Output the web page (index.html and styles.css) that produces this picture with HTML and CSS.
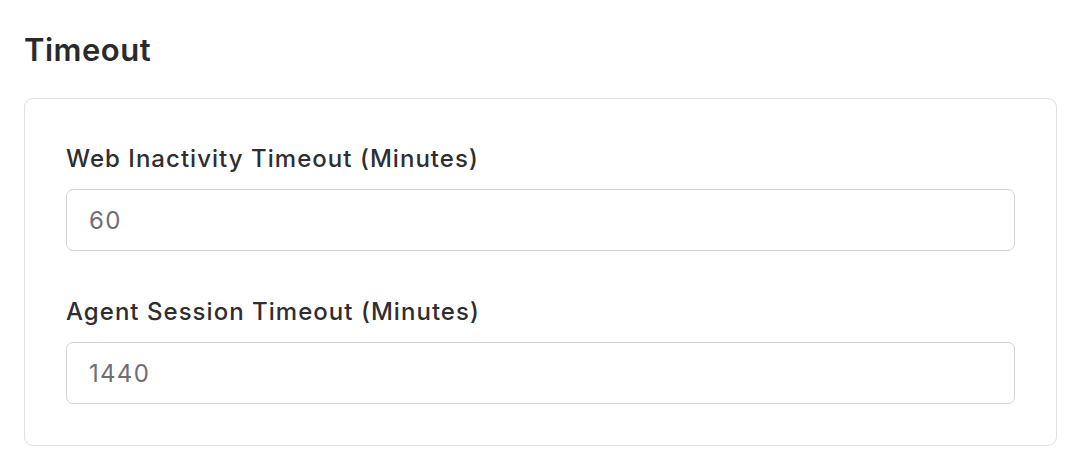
FILE: index.html
```html
<!DOCTYPE html>
<html>
<head>
<meta charset="utf-8">
<link rel="stylesheet" href="styles.css">
</head>
<body>
<div class="page">
  <h2 class="title">Timeout</h2>
  <div class="card">
    <div class="field">
      <label class="label">Web Inactivity Timeout (Minutes)</label>
      <div class="input">60</div>
    </div>
    <div class="field">
      <label class="label">Agent Session Timeout (Minutes)</label>
      <div class="input">1440</div>
    </div>
  </div>
</div>
</body>
</html>
```
FILE: styles.css
```css
html, body {
  margin: 0;
  padding: 0;
  background: #ffffff;
}
body {
  font-family: Inter, "Noto Sans", sans-serif;
  color: #2b2b2e;
}
.page {
  padding: 26px 25px 0 24px;
}
.title {
  margin: 0;
  font-size: 31px;
  font-weight: 600;
  line-height: 48px;
  letter-spacing: 0.5px;
  color: #2a2a2d;
}
.card {
  margin-top: 24px;
  border: 1px solid #dfe0e5;
  border-radius: 9px;
  padding: 40px 41px 41px 41px;
  display: flex;
  flex-direction: column;
  gap: 41px;
}
.field {
  display: flex;
  flex-direction: column;
  gap: 10px;
}
.label {
  font-size: 24px;
  font-weight: 500;
  line-height: 40px;
  letter-spacing: 1.03px;
  color: #2e2e31;
}
.input {
  height: 60px;
  border: 1px solid #d3d3d8;
  border-radius: 7px;
  padding: 0 22px;
  display: flex;
  align-items: center;
  font-size: 24px;
  letter-spacing: 1.3px;
  color: #6e6e73;
}
```
